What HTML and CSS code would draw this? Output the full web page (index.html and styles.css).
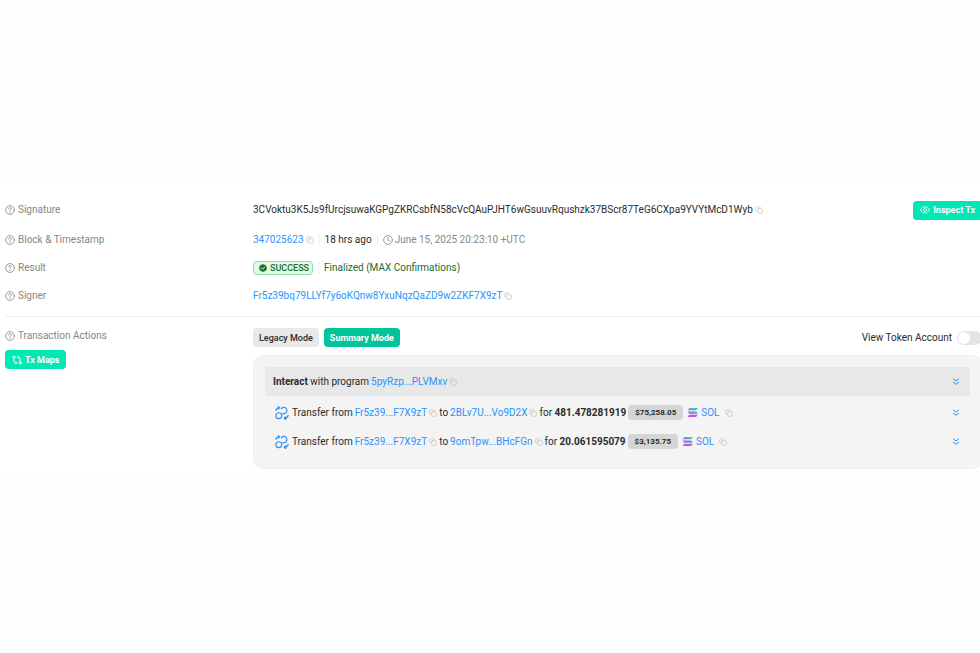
FILE: index.html
```
<!DOCTYPE html>
<html lang="en">
<head>
    <meta charset="UTF-8">
    <meta name="viewport" content="width=device-width, initial-scale=1.0">
    <title>Transaction Details</title>
    <link rel="stylesheet" href="styles.css">
</head>
<body>

<svg class="sprite" aria-hidden="true">
    <symbol id="help" viewBox="0 0 24 24">
        <circle cx="12" cy="12" r="10.5"/>
        <path d="M8.8 9.4a3.2 3.2 0 1 1 4.6 2.8c-1 .5-1.4 1-1.4 2.1M12 17v1.2"/>
    </symbol>
    <symbol id="copy" viewBox="0 0 24 24">
        <rect x="8" y="8" width="14" height="14" rx="3"/>
        <path d="M5 16a3 3 0 0 1-3-3V5a3 3 0 0 1 3-3h8a3 3 0 0 1 3 3"/>
    </symbol>
    <symbol id="clock" viewBox="0 0 24 24">
        <circle cx="12" cy="12" r="10.5"/>
        <path d="M12 5.5V12l4.5 2.5"/>
    </symbol>
    <symbol id="check" viewBox="0 0 24 24">
        <path fill="currentColor" stroke="none" d="M12 0l3.3 2.2 4-.2 1.3 3.8 3.2 2.4L22.6 12l1.2 3.8-3.2 2.4-1.3 3.8-4-.2L12 24l-3.3-2.2-4 .2-1.3-3.8L.2 15.8 1.4 12 .2 8.2l3.2-2.4L4.7 2l4 .2z"/>
        <path stroke="#e0fbe6" stroke-width="3" d="M7 12.3l3.5 3.5L17 9"/>
    </symbol>
    <symbol id="eye" viewBox="0 0 24 24">
        <path d="M1 12c2.5-5 6.5-7.500 11-7.500S20.500 7 23 12c-2.500 5-6.500 7.500-11 7.500S3.500 17 1 12z"/>
        <circle cx="12" cy="12" r="3.8"/>
    </symbol>
    <symbol id="maps" viewBox="0 0 24 24">
        <circle cx="4.5" cy="5" r="2.8"/>
        <circle cx="19.5" cy="19" r="2.8"/>
        <path d="M4.5 8v7a4 4 0 0 0 4 4H11M8.5 16l3 3-3 3M19.5 16V9a4 4 0 0 0-4-4H13M15.5 2l-3 3 3 3"/>
    </symbol>
    <symbol id="transfer" viewBox="0 0 24 24">
        <circle cx="6.5" cy="16.5" r="5"/>
        <path d="M11 4.5a5.3 5.3 0 1 1 5 8.500h-3M1.500 7.500C2 4.500 4 3 7.500 3M5.500 1l2.500 2-2.500 2.500M22.500 16c-.5 3.500-2.500 5-6.500 5M18.500 18.500L15.500 21l3 2.500"/>
    </symbol>
    <symbol id="chevrons" viewBox="0 0 24 24">
        <path d="M4 3l8 6 8-6M4 13l8 6 8-6"/>
    </symbol>
    <symbol id="solana" viewBox="0 0 24 20">
        <g fill="url(#sol)" stroke="none">
            <path d="M5 0h19l-4 5H1z"/>
            <path d="M1 7.5h19l4 5H5z"/>
            <path d="M5 15h19l-4 5H1z"/>
        </g>
    </symbol>
    <linearGradient id="sol" gradientUnits="userSpaceOnUse" x1="18" y1="0" x2="10" y2="20">
        <stop offset="0" stop-color="#35d6a8"/>
        <stop offset="0.5" stop-color="#8a7cd8"/>
        <stop offset="1" stop-color="#c94ff0"/>
    </linearGradient>
</svg>

<main class="details">
    <div class="row row-first">
        <div class="label"><svg class="icon"><use href="#help"/></svg>Signature</div>
        <div class="value">
            <span class="hash">3CVoktu3K5Js9fUrcjsuwaKGPgZKRCsbfN58cVcQAuPJHT6wGsuuvRqushzk37BScr87TeG6CXpa9YVYtMcD1Wyb</span>
            <button class="copy" aria-label="Copy"><svg class="icon"><use href="#copy"/></svg></button>
            <button class="btn btn-mint push"><svg class="icon"><use href="#eye"/></svg>Inspect Tx</button>
        </div>
    </div>
    <div class="row">
        <div class="label"><svg class="icon"><use href="#help"/></svg>Block &amp; Timestamp</div>
        <div class="value">
            <a href="#">347025623</a>
            <button class="copy" aria-label="Copy"><svg class="icon"><use href="#copy"/></svg></button>
            <span class="separated">18 hrs ago</span>
            <span class="separated time"><svg class="icon"><use href="#clock"/></svg>June 15, 2025 20:23:10 +UTC</span>
        </div>
    </div>
    <div class="row">
        <div class="label"><svg class="icon"><use href="#help"/></svg>Result</div>
        <div class="value">
            <span class="success"><svg class="icon"><use href="#check"/></svg>SUCCESS</span>
            <span class="separated finalized">Finalized (MAX Confirmations)</span>
        </div>
    </div>
    <div class="row">
        <div class="label"><svg class="icon"><use href="#help"/></svg>Signer</div>
        <div class="value">
            <a href="#">Fr5z39bq79LLYf7y6oKQnw8YxuNqzQaZD9w2ZKF7X9zT</a>
            <button class="copy" aria-label="Copy"><svg class="icon"><use href="#copy"/></svg></button>
        </div>
    </div>

    <section class="actions">
        <div class="actions-side">
            <div class="label"><svg class="icon"><use href="#help"/></svg>Transaction Actions</div>
            <button class="btn btn-mint"><svg class="icon"><use href="#maps"/></svg>Tx Maps</button>
        </div>
        <div class="actions-main">
            <div class="toolbar">
                <button class="btn btn-mode">Legacy Mode</button>
                <button class="btn btn-mode active">Summary Mode</button>
                <label class="token-label push" for="tokenAccount">View Token Account</label>
                <input type="checkbox" class="switch" id="tokenAccount">
            </div>
            <div class="panel">
                <div class="program">
                    <span><b>Interact</b> with program</span>
                    <a href="#">5pyRzp...PLVMxv</a>
                    <button class="copy" aria-label="Copy"><svg class="icon"><use href="#copy"/></svg></button>
                    <button class="expand push" aria-label="Expand"><svg class="icon"><use href="#chevrons"/></svg></button>
                </div>
                <div class="transfer">
                    <svg class="icon transfer-icon"><use href="#transfer"/></svg>
                    <span>Transfer from</span>
                    <a href="#">Fr5z39...F7X9zT</a>
                    <button class="copy" aria-label="Copy"><svg class="icon"><use href="#copy"/></svg></button>
                    <span>to</span>
                    <a href="#">2BLv7U...Vo9D2X</a>
                    <button class="copy" aria-label="Copy"><svg class="icon"><use href="#copy"/></svg></button>
                    <span>for <b>481.478281919</b></span>
                    <span class="price">$75,258.05</span>
                    <svg class="icon solana"><use href="#solana"/></svg>
                    <a href="#">SOL</a>
                    <button class="copy copy-last" aria-label="Copy"><svg class="icon"><use href="#copy"/></svg></button>
                    <button class="expand push" aria-label="Expand"><svg class="icon"><use href="#chevrons"/></svg></button>
                </div>
                <div class="transfer">
                    <svg class="icon transfer-icon"><use href="#transfer"/></svg>
                    <span>Transfer from</span>
                    <a href="#">Fr5z39...F7X9zT</a>
                    <button class="copy" aria-label="Copy"><svg class="icon"><use href="#copy"/></svg></button>
                    <span>to</span>
                    <a href="#">9omTpw...BHcFGn</a>
                    <button class="copy" aria-label="Copy"><svg class="icon"><use href="#copy"/></svg></button>
                    <span>for <b>20.061595079</b></span>
                    <span class="price">$3,135.75</span>
                    <svg class="icon solana"><use href="#solana"/></svg>
                    <a href="#">SOL</a>
                    <button class="copy copy-last" aria-label="Copy"><svg class="icon"><use href="#copy"/></svg></button>
                    <button class="expand push" aria-label="Expand"><svg class="icon"><use href="#chevrons"/></svg></button>
                </div>
            </div>
        </div>
    </section>
</main>

</body>
</html>
```
FILE: styles.css
```
* {
    box-sizing: border-box;
}

body {
    margin: 0;
    padding-top: 183px;
    background-color: #fdfdfd;
    color: #2b2b2b;
    font-family: Roboto, "Liberation Sans", sans-serif;
    font-size: 10px;
    line-height: 14px;
    white-space: nowrap;
    overflow: hidden;
}

a {
    color: #2a93fb;
    text-decoration: none;
}

button {
    padding: 0;
    border: none;
    background: none;
    color: inherit;
    font: inherit;
    cursor: pointer;
}

.sprite {
    position: absolute;
    width: 0;
    height: 0;
}

.icon {
    display: block;
    flex: none;
    width: 10px;
    height: 10px;
    fill: none;
    stroke: currentColor;
    stroke-width: 2;
    stroke-linecap: round;
    stroke-linejoin: round;
}

/* runs slightly past the right edge of the window */
.details {
    margin-right: -2px;
    padding: 17px 0 9px 5px;
    background-color: #fff;
}

.row {
    display: grid;
    grid-template-columns: 248px 1fr;
    align-items: center;
    height: 20px;
    margin-bottom: 8px;
}

.row-first {
    margin-bottom: 10px;
}

.label {
    display: flex;
    align-items: center;
    gap: 3px;
    color: #868686;
}

.value {
    display: flex;
    align-items: center;
    gap: 2px;
}

.push {
    margin-left: auto;
}

.copy {
    color: #c0c0c0;
}

.copy .icon {
    width: 8px;
    height: 8px;
}

.separated {
    margin-left: 3px;
    padding-left: 5px;
    border-left: 1px solid #eee;
    line-height: 10px;
}

.time {
    display: flex;
    align-items: center;
    gap: 2px;
    color: #868686;
}

.success {
    display: flex;
    align-items: center;
    gap: 3px;
    height: 14px;
    padding: 0 3px 0 5px;
    border: 1px solid #8fdca6;
    border-radius: 4px;
    background-color: #e0fbe6;
    color: #1b6b30;
    font-size: 9px;
    font-weight: 500;
}

.success .icon {
    width: 8px;
    height: 8px;
}

.finalized {
    color: #1b6b30;
}

.btn {
    display: flex;
    align-items: center;
    gap: 3px;
    height: 19px;
    padding: 0 7px;
    border-radius: 4px;
    font-size: 9px;
    font-weight: 500;
}

.btn-mint {
    background-color: #00e8b5;
    color: #fff;
    font-weight: 700;
}

.btn-mode {
    padding: 0 6px;
    background-color: #e8e8e8;
}

.btn-mode.active {
    background-color: #00c49a;
    color: #fff;
    font-weight: 700;
}

.actions {
    display: grid;
    grid-template-columns: 248px 1fr;
    margin-top: 10px;
    padding-top: 11px;
    border-top: 1px solid #eee;
}

.actions-side {
    display: flex;
    flex-direction: column;
    align-items: flex-start;
    gap: 7px;
    padding-top: 1px;
}

.toolbar {
    display: flex;
    align-items: center;
    gap: 5px;
}

.switch {
    appearance: none;
    width: 25px;
    height: 14px;
    margin: 0;
    padding: 1px;
    border-radius: 7px;
    background-color: #e4e4e4;
    cursor: pointer;
}

.switch::before {
    content: "";
    display: block;
    width: 12px;
    height: 12px;
    border-radius: 50%;
    background-color: #fff;
}

.switch:checked {
    background-color: #00c49a;
}

.switch:checked::before {
    margin-left: auto;
}

.panel {
    margin-top: 8px;
    padding: 11px 11px 12px;
    border: 1px solid #f0f0f0;
    border-radius: 10px;
    background-color: #f4f4f4;
}

.program,
.transfer {
    display: flex;
    align-items: center;
    gap: 2px;
    height: 29px;
    padding: 0 10px 0 8px;
}

.program {
    border-radius: 3px;
    background-color: #e8e8e8;
}

.transfer {
    padding-left: 10px;
}

.transfer:nth-child(2) {
    margin-top: 2px;
}

.transfer-icon {
    width: 14px;
    height: 14px;
    margin-right: 1px;
    color: #2a93fb;
}

.price {
    padding: 0 7px;
    border-radius: 4px;
    background-color: #d5d5d5;
    font-size: 8px;
    font-weight: 700;
    line-height: 15px;
}

.solana {
    width: 11px;
    height: 9px;
    margin: 0 1px 0 2px;
}

.copy-last {
    margin-left: 3px;
}

.expand {
    color: #2a93fb;
}

.expand .icon {
    width: 8px;
    height: 8px;
    stroke-width: 3;
}
```
